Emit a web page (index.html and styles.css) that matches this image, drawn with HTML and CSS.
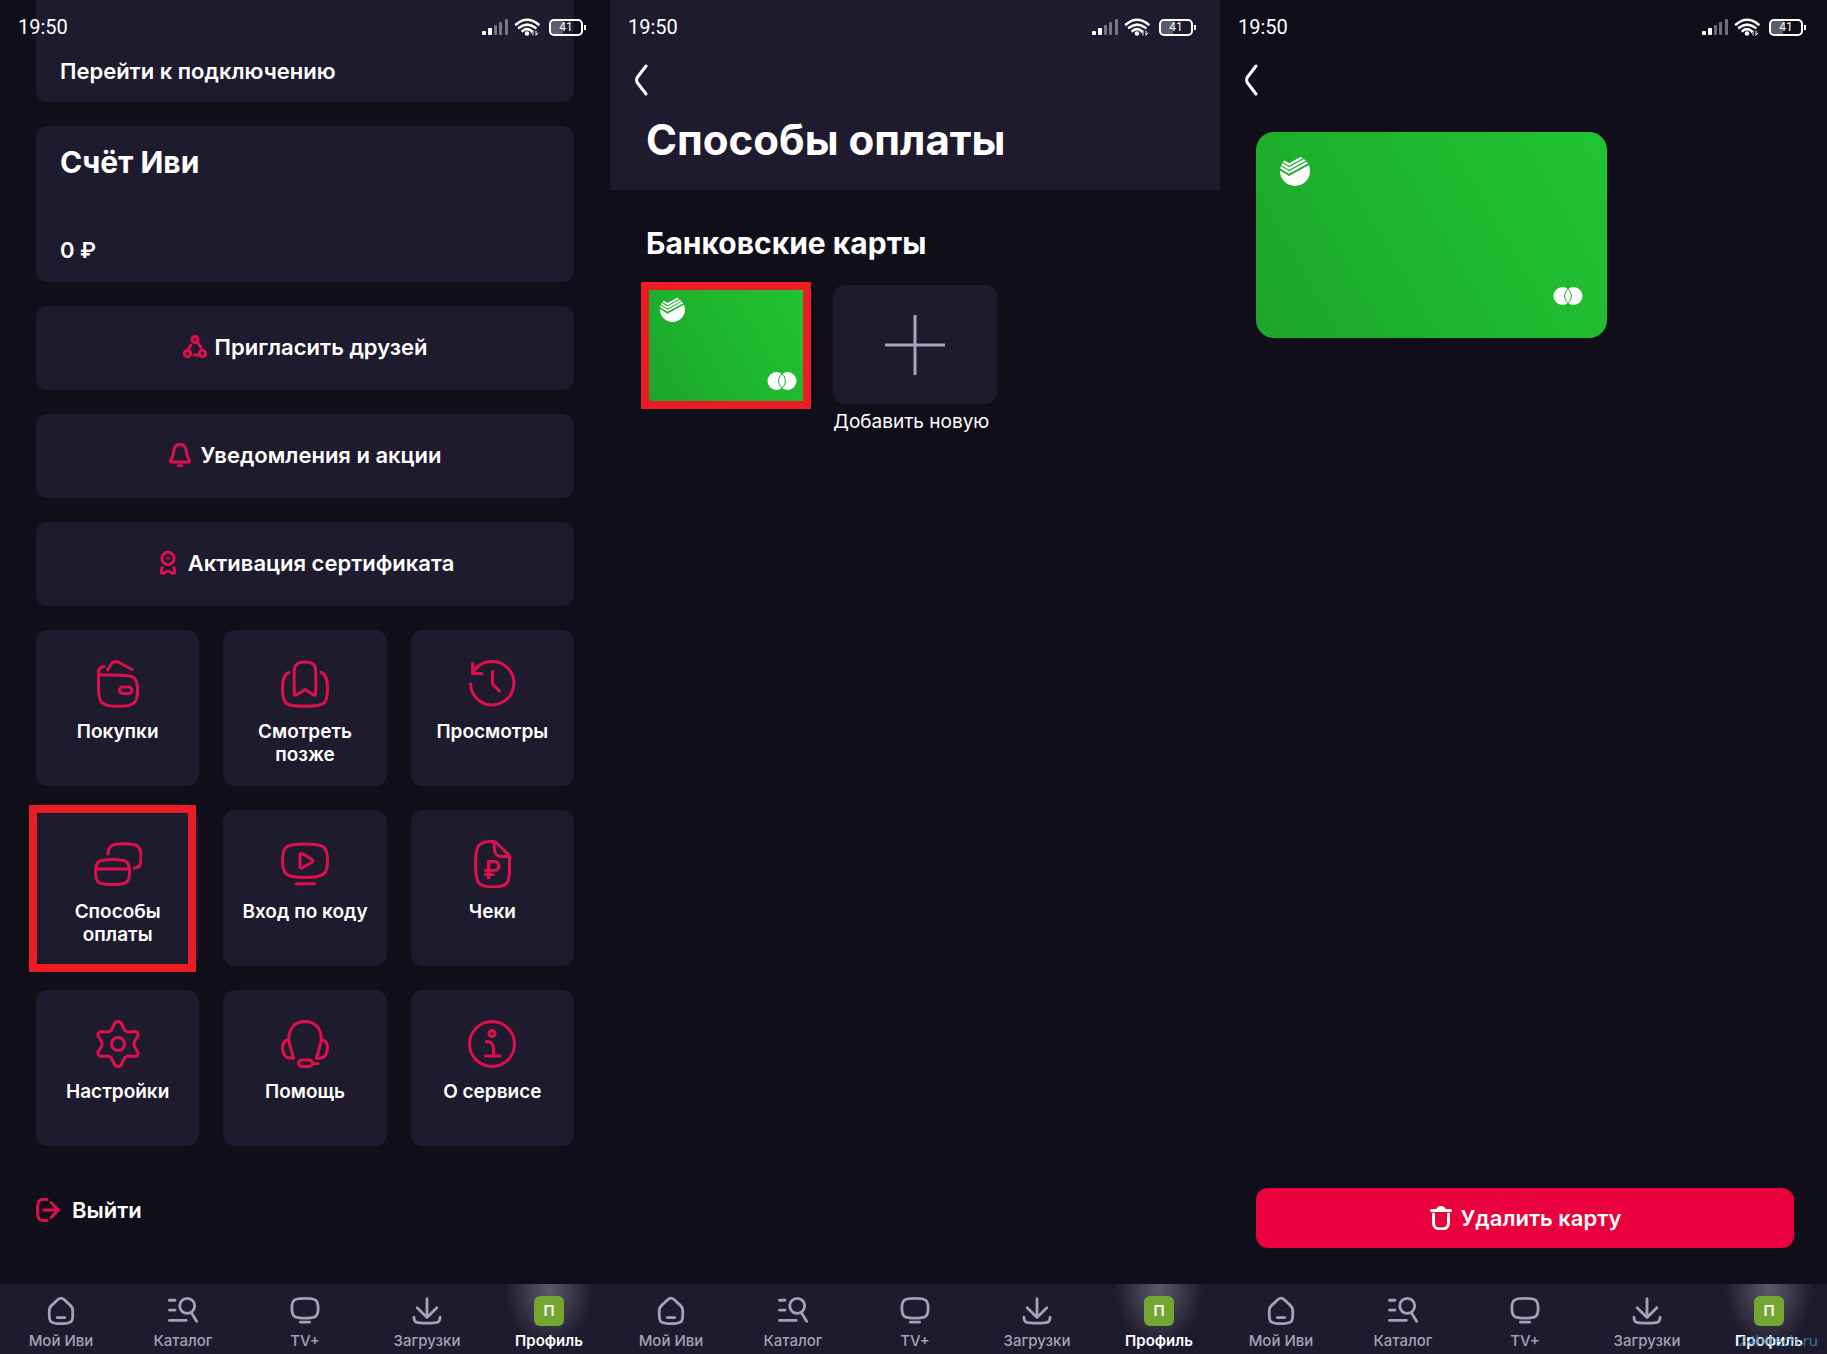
FILE: index.html
```
<!DOCTYPE html>
<html lang="ru">
<head>
    <meta charset="UTF-8">
    <meta name="viewport" content="width=device-width, initial-scale=1.0">
    <title>Иви — способы оплаты</title>
    <link rel="stylesheet" href="styles.css">
</head>
<body>
    <!-- Icon sprite -->
    <svg class="sprite" aria-hidden="true">
        <symbol id="i-status" viewBox="0 0 58 18">
            <g fill="#fff" stroke="none">
                <rect x="0" y="13" width="4" height="4" rx="1"/>
                <rect x="6" y="10" width="4" height="7" rx="1"/>
                <g opacity=".4">
                    <rect x="12" y="7" width="3" height="10" rx="1"/>
                    <rect x="17" y="4" width="3" height="13" rx="1"/>
                    <rect x="23" y="1" width="3" height="16" rx="1"/>
                </g>
                <circle cx="45" cy="15.5" r="2.3"/>
                <path d="M51 13v4M49 15l2-2M54 17v-4M54 17l2-2" stroke="#fff" stroke-width="1"/>
            </g>
            <g fill="none" stroke="#fff" stroke-width="2.6">
                <path d="M34 6.500q11-9.500 22.500 0"/>
                <path d="M37 9.800q8-6.500 16.500 0"/>
                <path d="M40.500 13q4.500-3.600 9 0"/>
            </g>
        </symbol>
        <symbol id="i-back" viewBox="0 0 14 32">
            <path d="M12 2 3.200 13.500Q2 16 3.200 18.500L12 30"/>
        </symbol>
        <symbol id="i-friends" viewBox="0 0 24 24">
            <circle cx="12" cy="4.500" r="3"/>
            <circle cx="4.500" cy="18.500" r="3.200"/>
            <circle cx="19.500" cy="18.500" r="3.200"/>
            <path d="M7.600 10.200 5.600 14M14.500 7.500 18 12.500M11 20h5"/>
        </symbol>
        <symbol id="i-bell" viewBox="0 0 24 24">
            <path d="M12 1.500c-4.500 0-6 3-6.300 7-.3 4.500-1.300 6-3 8.500-.8 1.200-.4 2 1 2h16.600c1.400 0 1.800-.8 1-2-1.700-2.500-2.700-4-3-8.500-.3-4-1.800-7-6.300-7z"/>
            <path d="M10.500 22.700h3"/>
        </symbol>
        <symbol id="i-award" viewBox="0 0 24 24">
            <circle cx="12" cy="7.500" r="6.200"/>
            <circle cx="12" cy="7.500" r=".5"/>
            <path d="M6 16.500 5.500 21Q5.500 22.800 7.500 22.500L9 21.500Q12 19 15 21.500L16.500 22.500Q18.500 22.800 18.500 21L18 16.500"/>
        </symbol>
        <symbol id="i-wallet" viewBox="0 0 48 48">
            <path d="M10 6.500C6 7.500 4.500 9 4.500 11.500V28c0 15 3 18.300 19.500 18.300S43.500 43 43.500 30.500 41 15.500 28 15.200L9 15c-3 0-4.500-1.500-4.500-3.500"/>
            <path d="M13.500 10 17 4.500q3-4.500 8-2L38 9.500"/>
            <rect x="25.500" y="27" width="12.500" height="6.500" rx="3.200"/>
        </symbol>
        <symbol id="i-bookmark" viewBox="0 0 48 48">
            <path d="M13.500 34C13 29 13 12 13.500 8.500 14 4 17 2 24 2s10 2 10.500 6.500C35 12 35 29 34.500 34q-.3 2-2 1L24 29.500 15.500 35q-1.700 1-2-1z"/>
            <path d="M8 12.500C3 14 1.500 19 1.500 28.500 1.500 44 4 46.300 24 46.300S46.500 44 46.500 28.500C46.500 19 45 14 40 12.500"/>
        </symbol>
        <symbol id="i-history" viewBox="0 0 48 48">
            <path d="M2.500 24A21.700 21.700 0 1 0 5 13"/>
            <path d="M4.500 3.500V13.500H14M24.500 11.500V24L31.500 31"/>
        </symbol>
        <symbol id="i-cards" viewBox="0 0 48 48">
            <path d="M1.500 32c0-10.500 2.500-12.500 17-12.500s17 2 17 12.500-2.500 12.500-17 12.500-17-2-17-12.500zM2 29h33"/>
            <path d="M14 14C14 6 17 3.800 30.500 3.800S47 6 47 16.500c0 9.500-1.500 11-7 11.800"/>
        </symbol>
        <symbol id="i-tvcode" viewBox="0 0 48 48">
            <path d="M1.500 20.500C1.500 6.500 5 4 24 4s22.500 2.500 22.500 16.500S43 37.500 24 37.500 1.500 34.500 1.500 20.500z"/>
            <path d="M19 15.500v10.500q0 3 2.500 1.600l9.500-5.400q2-1.400 0-2.800l-9.500-5.500Q19 12.500 19 15.500zM15 43.800h18.500"/>
        </symbol>
        <symbol id="i-gear" viewBox="0 0 48 48">
            <path d="M21 2.500Q24 .5 27 2.500L30 9Q31.500 12 34.500 12L41 11.500Q44.500 12.500 44 16L40.500 21.500Q39.500 24 40.500 26.500L44 32Q44.500 35.500 41 36.500L34.500 36Q31.500 36 30 39L27 45.500Q24 47.500 21 45.500L18 39Q16.500 36 13.500 36L7 36.500Q3.500 35.500 4 32L7.500 26.500Q8.500 24 7.500 21.500L4 16Q3.500 12.500 7 11.500L13.500 12Q16.500 12 18 9Z"/>
            <circle cx="24" cy="24" r="6.500"/>
        </symbol>
        <symbol id="i-headset" viewBox="0 0 48 48">
            <path d="M12.500 38.200 8 22C6.500 9 13.500 1.500 24 1.500S41.500 9 40 22L35.500 38.200"/>
            <path d="M7.500 19.500C2.500 21 1 25 1.700 29.500 2.800 36 4.500 38.500 12.500 38.200M40.500 19.500C45.500 21 47 25 46.300 29.500 45.200 36 43.500 38.500 35.500 38.200"/>
            <rect x="17.500" y="40" width="14" height="6.500" rx="3.200"/>
            <path d="M31.500 43.500H37"/>
        </symbol>
        <symbol id="i-info" viewBox="0 0 48 48">
            <circle cx="24" cy="24" r="22.500"/>
            <circle cx="24" cy="13.500" r="3"/>
            <path d="M18.500 21.500q7 .5 7 7V36M17.500 36h14.500"/>
        </symbol>
        <symbol id="i-logout" viewBox="0 0 24 24">
            <path d="M11 1.500C3 .8 1.500 2 1.500 12S3 23.200 11 22.500M7.500 12H22M15 4.500 22.500 12 15 19.500"/>
        </symbol>
        <symbol id="i-trash" viewBox="0 0 24 24">
            <path d="M2.500 4.500h19M4.500 8v8.500c0 5 2 6.500 7.500 6.500s7.500-1.500 7.500-6.500V8"/>
            <path d="M8.500 4q1-2.500 3.500-2.500T15.500 4z" fill="currentColor"/>
        </symbol>
        <symbol id="i-home" viewBox="0 0 32 32">
            <path d="M3.500 15Q3.800 12 6 10L13 3.500Q16 1 19 3.500L26 10Q28.200 12 28.500 15V21C28.500 28 26 29.500 16 29.500S3.500 28 3.500 21z"/>
            <path d="M12 23h8"/>
        </symbol>
        <symbol id="i-catalog" viewBox="0 0 32 32">
            <path d="M1.500 4.500h6M1.500 15h6M1.500 26h18"/>
            <ellipse cx="20.500" cy="10.500" rx="8" ry="8"/>
            <path d="M25 18 30.500 27"/>
        </symbol>
        <symbol id="i-tv" viewBox="0 0 32 32">
            <path d="M2 13C2 4 4.500 2.500 16 2.500S30 4 30 13 27.500 23.500 16 23.500 2 22 2 13z"/>
            <path d="M11 27.800h10"/>
        </symbol>
        <symbol id="i-download" viewBox="0 0 32 32">
            <path d="M16 3V21M5.500 12.500 16 23 26.500 12.500M2 22.500C2.500 28.500 4 29 16 29S29.500 28.500 30 22.500"/>
        </symbol>
        <symbol id="i-plus" viewBox="0 0 60 60">
            <path d="M30 0v60M0 30h60"/>
        </symbol>
        <symbol id="i-sber" viewBox="0 0 30 30">
            <clipPath id="disc"><circle cx="15" cy="15" r="15"/></clipPath>
            <g clip-path="url(#disc)">
                <path d="M0 14.500 9 20 30 8.500V30H0z" fill="#fff" stroke="none"/>
                <path d="M4 5.500 9 8.500 22 1.500M0 7 9 12.500 27 2.800M0 11 9 16.500 30 5" fill="none" stroke="#fff" stroke-width="2.200"/>
            </g>
        </symbol>
        <symbol id="i-brand" viewBox="0 0 30 18">
            <circle cx="9.500" cy="9" r="9" fill="#fff" stroke="none"/>
            <circle cx="20.500" cy="9" r="9" fill="#fff" stroke="none"/>
            <path d="M15 1.900a9 9 0 0 1 0 14.200 9 9 0 0 1 0-14.200z" fill="none" stroke="#1eaf2c" stroke-width="1"/>
        </symbol>
    </svg>

    <main class="screens">
        <!-- Profile -->
        <section class="screen">
            <header class="status-bar">
                <time>19:50</time>
                <svg class="status-icons"><use href="#i-status"/></svg>
                <span class="battery">41</span>
            </header>
            <div class="content profile">
                <a class="panel connect" href="#">Перейти к подключению</a>
                <div class="panel account">
                    <h2>Счёт Иви</h2>
                    <span>0 ₽</span>
                </div>
                <button class="panel row-btn"><svg class="icon"><use href="#i-friends"/></svg>Пригласить друзей</button>
                <button class="panel row-btn"><svg class="icon"><use href="#i-bell"/></svg>Уведомления и акции</button>
                <button class="panel row-btn"><svg class="icon"><use href="#i-award"/></svg>Активация сертификата</button>
                <div class="tiles">
                    <button class="panel tile"><svg class="icon"><use href="#i-wallet"/></svg>Покупки</button>
                    <button class="panel tile"><svg class="icon"><use href="#i-bookmark"/></svg>Смотреть позже</button>
                    <button class="panel tile"><svg class="icon"><use href="#i-history"/></svg>Просмотры</button>
                    <button class="panel tile marked"><svg class="icon"><use href="#i-cards"/></svg>Способы оплаты</button>
                    <button class="panel tile"><svg class="icon"><use href="#i-tvcode"/></svg>Вход по коду</button>
                    <button class="panel tile">
                        <svg class="icon" viewBox="0 0 48 48">
                            <path d="M26 1.500C10 1 7.500 5 7.500 24S10 47 24.500 47 41.500 43 41.500 30V16.500q0-1-1-2L27.500 2q-.8-.6-1.500-.5C26 12 27 16.500 34 16.500h7"/>
                            <text x="24" y="39" class="rouble">₽</text>
                        </svg>
                        Чеки
                    </button>
                    <button class="panel tile"><svg class="icon"><use href="#i-gear"/></svg>Настройки</button>
                    <button class="panel tile"><svg class="icon"><use href="#i-headset"/></svg>Помощь</button>
                    <button class="panel tile"><svg class="icon"><use href="#i-info"/></svg>О сервисе</button>
                </div>
                <button class="logout"><svg class="icon"><use href="#i-logout"/></svg>Выйти</button>
            </div>
            <nav class="tabs">
                <a href="#"><svg class="tab-icon"><use href="#i-home"/></svg>Мой Иви</a>
                <a href="#"><svg class="tab-icon"><use href="#i-catalog"/></svg>Каталог</a>
                <a href="#"><svg class="tab-icon"><use href="#i-tv"/></svg>TV+</a>
                <a href="#"><svg class="tab-icon"><use href="#i-download"/></svg>Загрузки</a>
                <a href="#" class="active"><span class="avatar">П</span>Профиль</a>
            </nav>
        </section>

        <!-- Payment methods -->
        <section class="screen">
            <header class="status-bar">
                <time>19:50</time>
                <svg class="status-icons"><use href="#i-status"/></svg>
                <span class="battery">41</span>
            </header>
            <div class="page-head">
                <button class="back" aria-label="Назад"><svg><use href="#i-back"/></svg></button>
                <h1>Способы оплаты</h1>
            </div>
            <div class="content methods">
                <h2>Банковские карты</h2>
                <div class="method-list">
                    <button class="bank-card small marked" aria-label="Банковская карта">
                        <svg class="bank-logo"><use href="#i-sber"/></svg>
                        <svg class="brand-logo"><use href="#i-brand"/></svg>
                    </button>
                    <div class="add-method">
                        <button class="panel add-btn" aria-labelledby="add-label"><svg><use href="#i-plus"/></svg></button>
                        <span id="add-label">Добавить новую</span>
                    </div>
                </div>
            </div>
            <nav class="tabs">
                <a href="#"><svg class="tab-icon"><use href="#i-home"/></svg>Мой Иви</a>
                <a href="#"><svg class="tab-icon"><use href="#i-catalog"/></svg>Каталог</a>
                <a href="#"><svg class="tab-icon"><use href="#i-tv"/></svg>TV+</a>
                <a href="#"><svg class="tab-icon"><use href="#i-download"/></svg>Загрузки</a>
                <a href="#" class="active"><span class="avatar">П</span>Профиль</a>
            </nav>
        </section>

        <!-- Card details -->
        <section class="screen">
            <header class="status-bar">
                <time>19:50</time>
                <svg class="status-icons"><use href="#i-status"/></svg>
                <span class="battery">41</span>
            </header>
            <div class="page-head plain">
                <button class="back" aria-label="Назад"><svg><use href="#i-back"/></svg></button>
            </div>
            <div class="content details">
                <div class="bank-card">
                    <svg class="bank-logo"><use href="#i-sber"/></svg>
                    <svg class="brand-logo"><use href="#i-brand"/></svg>
                </div>
                <button class="delete-btn"><svg class="icon"><use href="#i-trash"/></svg>Удалить карту</button>
            </div>
            <nav class="tabs">
                <a href="#"><svg class="tab-icon"><use href="#i-home"/></svg>Мой Иви</a>
                <a href="#"><svg class="tab-icon"><use href="#i-catalog"/></svg>Каталог</a>
                <a href="#"><svg class="tab-icon"><use href="#i-tv"/></svg>TV+</a>
                <a href="#"><svg class="tab-icon"><use href="#i-download"/></svg>Загрузки</a>
                <a href="#" class="active"><span class="avatar">П</span>Профиль</a>
            </nav>
            <span class="watermark">24hitech.ru</span>
        </section>
    </main>
</body>
</html>
```
FILE: styles.css
```
* {
    box-sizing: border-box;
}

body {
    margin: 0;
    background: #100e19;
    color: #fff;
    font-family: Inter, "Noto Sans", sans-serif;
    font-size: 22px;
    font-weight: 600;
    overflow-x: hidden;
}

button {
    border: none;
    padding: 0;
    background: none;
    color: inherit;
    font: inherit;
    cursor: pointer;
}

a {
    color: inherit;
    text-decoration: none;
}

h1, h2 {
    margin: 0;
    font-weight: 700;
}

svg {
    display: block;
    fill: none;
    stroke: currentColor;
    stroke-linecap: round;
    stroke-linejoin: round;
}

.sprite {
    position: absolute;
    width: 0;
    height: 0;
}

/* The last screen runs slightly past the window edge */
.screens {
    display: grid;
    grid-template-columns: repeat(3, 1fr);
    width: calc(100% + 3px);
    min-height: 100vh;
}

.screen {
    position: relative;
    display: flex;
    flex-direction: column;
}

.content {
    flex: 1;
    display: flex;
    flex-direction: column;
    padding: 0 36px;
}

/* Status bar floats over the scrolled content */
.status-bar {
    position: absolute;
    top: 0;
    left: 0;
    right: 0;
    display: flex;
    align-items: center;
    gap: 9px;
    padding: 15px 27px 0 18px;
    font-family: Roboto, sans-serif;
    font-size: 20px;
    font-weight: 400;
    line-height: 24px;
}

.status-icons {
    width: 58px;
    height: 18px;
    margin-left: auto;
    stroke: none;
}

.battery {
    position: relative;
    width: 34px;
    height: 17px;
    border: 2px solid #fff;
    border-radius: 5px;
    background: linear-gradient(90deg, #5e5c68 40%, transparent 40%);
    background-clip: content-box;
    font-size: 12px;
    line-height: 13px;
    text-align: center;
}

.battery::after {
    content: "";
    position: absolute;
    top: 4px;
    right: -5px;
    width: 2px;
    height: 5px;
    background: #fff;
}

.panel {
    background: #1f1b2e;
    border-radius: 12px;
}

/* Profile */
.profile {
    gap: 24px;
}

.connect {
    padding: 57px 24px 17px;
    border-radius: 0 0 12px 12px;
    line-height: 28px;
}

.account {
    display: flex;
    flex-direction: column;
    justify-content: space-between;
    height: 156px;
    padding: 18px 24px;
    line-height: 28px;
}

.account h2 {
    font-size: 30px;
    line-height: 36px;
}

.row-btn {
    display: flex;
    justify-content: center;
    align-items: center;
    gap: 8px;
    height: 84px;
    padding-bottom: 2px;
}

.icon {
    width: 24px;
    height: 24px;
    flex: none;
    color: #de104c;
    stroke-width: 3;
}

.tiles {
    display: grid;
    grid-template-columns: repeat(3, 1fr);
    gap: 24px;
}

.tile {
    display: flex;
    flex-direction: column;
    align-items: center;
    gap: 12px;
    height: 156px;
    padding: 30px 16px 0;
    font-size: 19px;
    line-height: 23px;
}

.tile .icon {
    width: 48px;
    height: 48px;
}

.rouble {
    fill: currentColor;
    stroke: none;
    font-size: 25px;
    font-weight: 600;
    text-anchor: middle;
}

.marked {
    position: relative;
}

.marked::after {
    content: "";
    position: absolute;
    inset: -5px 3px -6px -7px;
    border: 8px solid #ec1c24;
}

.logout {
    display: flex;
    align-items: center;
    align-self: flex-start;
    gap: 12px;
    margin-top: 26px;
    line-height: 28px;
}

/* Payment methods */
.page-head {
    height: 190px;
    padding: 64px 24px 0;
    background: #1f1b2e;
}

.page-head.plain {
    height: 132px;
    background: none;
}

.page-head h1 {
    padding: 18px 12px 0;
    font-size: 42px;
    line-height: 52px;
}

.back {
    display: block;
    width: 14px;
    height: 32px;
}

.back svg {
    width: 14px;
    height: 32px;
    stroke-width: 3;
}

.methods {
    padding-top: 35px;
}

.methods h2 {
    font-size: 30px;
    line-height: 36px;
}

.method-list {
    display: grid;
    grid-template-columns: repeat(3, 1fr);
    align-items: start;
    gap: 24px;
    margin-top: 24px;
}

.bank-card {
    display: flex;
    flex-direction: column;
    justify-content: space-between;
    width: 351px;
    height: 206px;
    padding: 24px 24px 33px;
    border-radius: 18px;
    background: linear-gradient(60deg, #1da52b, #1fb62e 50%, #20c431);
}

.bank-card.small {
    width: auto;
    height: 119px;
    padding: 12px 12px 14px 14px;
    border-radius: 12px;
}

.bank-card.small::after {
    inset: -3px -2px -5px -5px;
}

.bank-logo {
    width: 30px;
    height: 30px;
}

.small .bank-logo {
    width: 25px;
    height: 25px;
}

.brand-logo {
    align-self: flex-end;
    width: 30px;
    height: 18px;
}

.add-method {
    font-size: 19px;
    font-weight: 400;
    line-height: 24px;
    white-space: nowrap;
}

.add-btn {
    display: grid;
    place-items: center;
    width: 100%;
    height: 119px;
    margin-bottom: 6px;
}

.add-btn svg {
    width: 60px;
    height: 60px;
    stroke: #a9a5ba;
    stroke-width: 3;
    stroke-linecap: butt;
}

/* Card details */
.details {
    justify-content: space-between;
    padding-bottom: 36px;
}

.delete-btn {
    display: flex;
    justify-content: center;
    align-items: center;
    gap: 8px;
    height: 60px;
    border-radius: 12px;
    background: #ea003d;
}

.delete-btn .icon {
    color: #fff;
}

/* Bottom tabs */
.tabs {
    display: grid;
    grid-template-columns: repeat(5, 1fr);
    height: 70px;
    background: #1f1b2e;
    color: #a5a1b6;
    font-size: 15px;
    font-weight: 500;
    line-height: 20px;
}

.tabs a {
    display: flex;
    flex-direction: column;
    align-items: center;
    gap: 5px;
    padding-top: 12px;
}

.tab-icon {
    width: 30px;
    height: 30px;
    stroke-width: 3;
}

.tabs .active {
    color: #fff;
    font-weight: 600;
    background: radial-gradient(44px 56px at 50% 6px, #5c596b, #1f1b2e00);
}

.avatar {
    width: 30px;
    height: 30px;
    border-radius: 6px;
    background: #73a52f;
    font-size: 15px;
    line-height: 30px;
    text-align: center;
}

.watermark {
    position: absolute;
    right: 12px;
    bottom: 2px;
    color: #3d8fc4;
    font-family: "Open Sans", sans-serif;
    font-size: 15px;
    font-weight: 400;
    line-height: 24px;
    opacity: .8;
}
```
